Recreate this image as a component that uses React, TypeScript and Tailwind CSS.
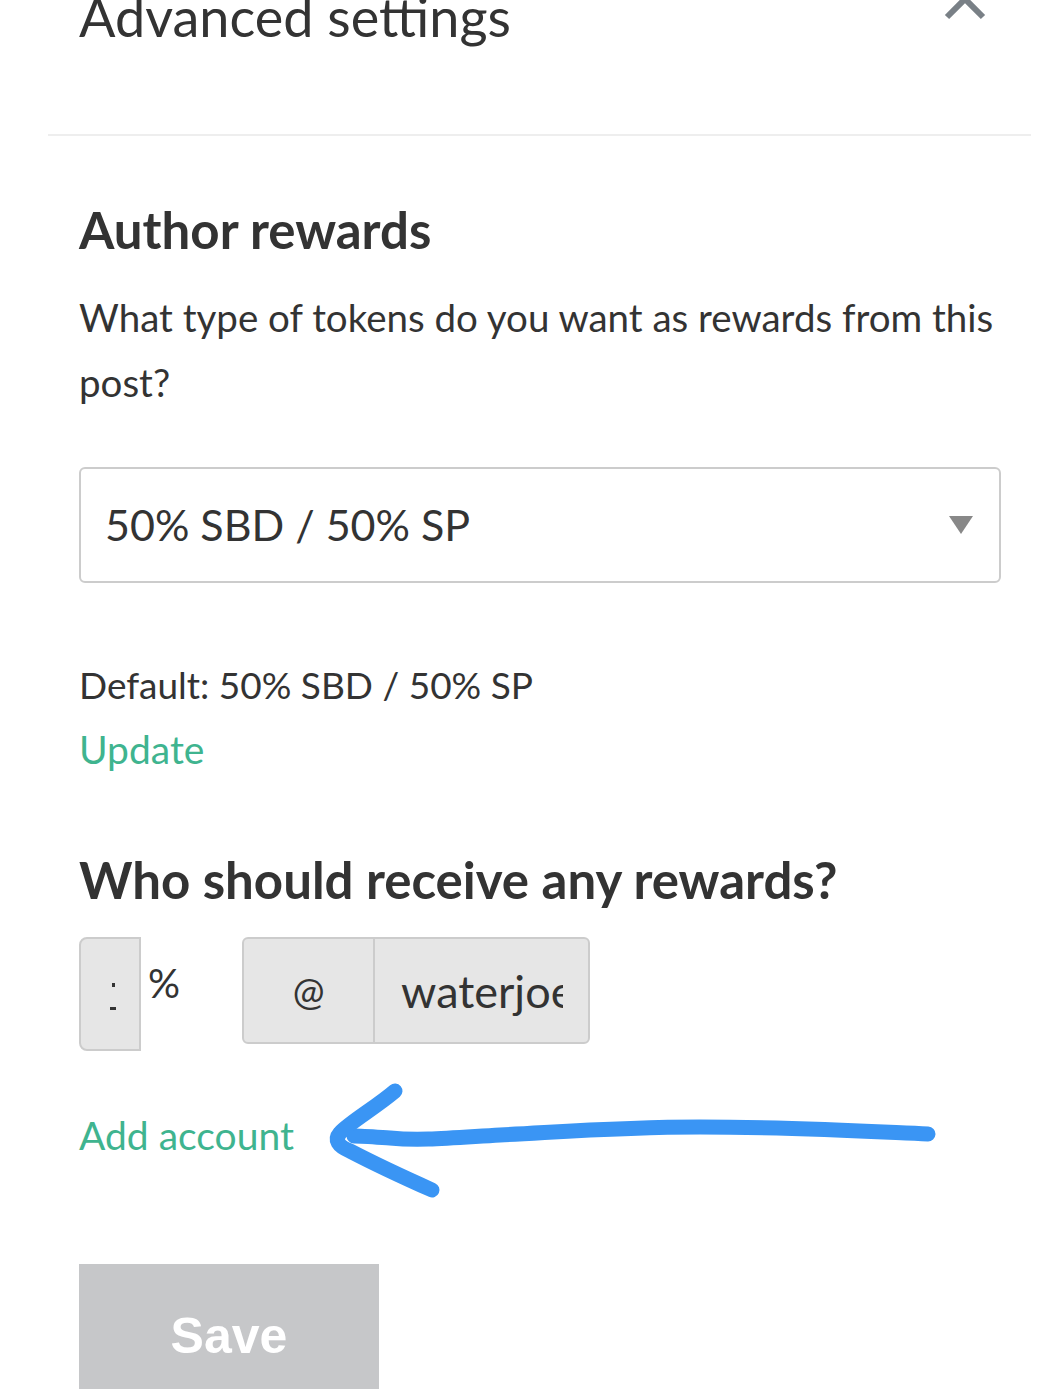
import React from "react";

function Arrow() {
  return (
    <svg
      className="pointer-events-none absolute left-0 top-0"
      width="1063"
      height="1389"
      viewBox="0 0 1063 1389"
    >
      <g
        fill="none"
        stroke="#3a95f4"
        strokeWidth="15"
        strokeLinecap="round"
        strokeLinejoin="round"
      >
        <path d="M928 1134 C 860 1131, 790 1127, 700 1127 C 620 1127, 560 1132, 500 1135 C 450 1138, 420 1141, 390 1138 C 375 1137, 362 1136, 354 1136" />
        <path d="M395 1091 C 375 1108, 350 1122, 340 1133 C 334 1140, 338 1146, 350 1151 C 375 1164, 405 1178, 432 1190" />
      </g>
    </svg>
  );
}

export default function App() {
  const font = { fontFamily: "Lato, 'Noto Sans', sans-serif" };
  return (
    <div
      className="relative h-[1389px] w-[1063px] overflow-hidden bg-white text-[#333333]"
      style={font}
    >
      <div className="ml-[48px] mr-[32px]">
        {/* Header */}
        <div className="flex h-[136px] items-start justify-between border-b-2 border-[#eeeeee]">
          <h2 className="-mt-[13px] ml-[31px] text-[54px] leading-[60px] font-normal text-[#333333]">
            Advanced settings
          </h2>
          <svg
            className="-mt-[25px] mr-[42px]"
            width="48"
            height="48"
            viewBox="0 0 48 48"
          >
            <path
              d="M6 6 L42 42 M42 6 L6 42"
              stroke="#798086"
              strokeWidth="6"
              fill="none"
            />
          </svg>
        </div>

        {/* Body */}
        <div className="pl-[31px] pr-[30px]">
          <h3 className="mt-[66px] text-[51px] leading-[56px] font-bold">
            Author rewards
          </h3>
          <p className="mt-[27px] text-[38.5px] leading-[65px]">
            What type of tokens do you want as rewards from this post?
          </p>

          <div className="mt-[52px] flex h-[116px] items-center justify-between rounded-[6px] border-2 border-[#cccccc] bg-white pl-[24px] pr-[26px]">
            <span className="text-[43px] leading-[48px]">
              50% SBD / 50% SP
            </span>
            <svg width="24" height="18" viewBox="0 0 24 18">
              <path d="M0 0 L24 0 L12 18 Z" fill="#888888" />
            </svg>
          </div>

          <p className="mt-[69px] text-[37px] leading-[65px]">
            Default: 50% SBD / 50% SP
          </p>
          <p className="text-[39px] leading-[65px] text-[#3fb48f]">Update</p>

          <h3 className="mt-[70px] text-[51px] leading-[56px] font-bold">
            Who should receive any rewards?
          </h3>

          <div className="mt-[29px] flex items-start">
            <div className="relative h-[114px] w-[62px] rounded-l-[8px] border-2 border-[#cccccc] bg-[#e6e6e6]">
              <span className="absolute left-[31px] top-[44px] h-[4px] w-[3px] bg-[#333333]" />
              <span className="absolute left-[29px] top-[68px] h-[3px] w-[6px] bg-[#333333]" />
            </div>
            <span className="ml-[7px] mt-[24px] text-[40px] leading-[44px]">
              %
            </span>
            <div className="ml-[62px] flex h-[107px] w-[348px] overflow-hidden rounded-[6px] border-2 border-[#cccccc] bg-[#e6e6e6]">
              <div className="flex w-[133px] items-center justify-center border-r-2 border-[#cccccc] text-[38px]">
                @
              </div>
              <div className="flex items-center pl-[26px] pr-[25px]">
                <div className="w-[162px] overflow-hidden whitespace-nowrap text-[45px] leading-[56px]">
                  waterjoe
                </div>
              </div>
            </div>
          </div>

          <p className="mt-[52px] text-[39px] leading-[65px] text-[#3fb48f]">
            Add account
          </p>

          <button
            className="mt-[96px] flex h-[130px] w-[300px] items-start justify-center bg-[#c6c7c9] pt-[44px] text-[50px] leading-[56px] font-bold text-white"
            style={{ fontFamily: "'Liberation Sans', Arial, sans-serif" }}
          >
            Save
          </button>
        </div>
      </div>
      <Arrow />
    </div>
  );
}
